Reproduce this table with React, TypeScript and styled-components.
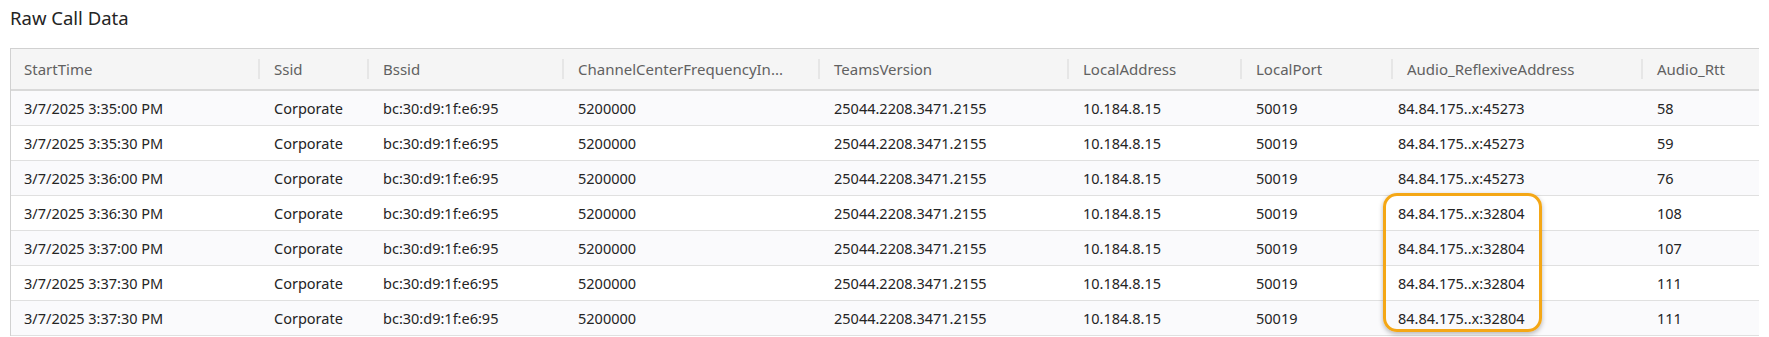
import React from 'react';
import styled, { createGlobalStyle } from 'styled-components';

const GlobalStyle = createGlobalStyle`
  html, body {
    margin: 0;
    padding: 0;
    background: #ffffff;
  }
  body {
    font-family: 'Noto Sans', 'Open Sans', sans-serif;
    color: #242424;
  }
`;

// pad = left padding of body cells in that column
const columns = [
  { key: 'startTime', title: 'StartTime', width: 247, pad: 13 },
  { key: 'ssid', title: 'Ssid', width: 109, pad: 16 },
  { key: 'bssid', title: 'Bssid', width: 195, pad: 16 },
  { key: 'freq', title: 'ChannelCenterFrequencyIn...', width: 256, pad: 16 },
  { key: 'teams', title: 'TeamsVersion', width: 249, pad: 16 },
  { key: 'localAddress', title: 'LocalAddress', width: 173, pad: 16 },
  { key: 'localPort', title: 'LocalPort', width: 151, pad: 16 },
  { key: 'reflexive', title: 'Audio_ReflexiveAddress', width: 250, pad: 7 },
  { key: 'rtt', title: 'Audio_Rtt', width: 200, pad: 16 },
];

const rows = [
  ['3/7/2025 3:35:00 PM', '45273', '58'],
  ['3/7/2025 3:35:30 PM', '45273', '59'],
  ['3/7/2025 3:36:00 PM', '45273', '76'],
  ['3/7/2025 3:36:30 PM', '32804', '108'],
  ['3/7/2025 3:37:00 PM', '32804', '107'],
  ['3/7/2025 3:37:30 PM', '32804', '111'],
  ['3/7/2025 3:37:30 PM', '32804', '111'],
].map(([time, port, rtt]) => [
  time,
  'Corporate',
  'bc:30:d9:1f:e6:95',
  '5200000',
  '25044.2208.3471.2155',
  '10.184.8.15',
  '50019',
  `84.84.175..x:${port}`,
  rtt,
]);

const gridTemplate = columns.map((c) => `${c.width}px`).join(' ');

const Page = styled.div`
  padding: 6px 0 0 10px;
  overflow: hidden;
  width: 1759px;
  height: 337px;
  box-sizing: border-box;
`;

const Title = styled.h2`
  margin: 0 0 18px;
  font-size: 18.5px;
  line-height: 24px;
  font-weight: 400;
  color: #242424;
`;

const TableWrap = styled.div`
  position: relative;
  width: 1900px;
  border-top: 1px solid #d1d1d1;
  border-left: 1px solid #d1d1d1;
`;

const HeaderRow = styled.div`
  display: grid;
  grid-template-columns: ${gridTemplate};
  height: 40px;
  background: #f5f5f5;
  border-bottom: 2px solid #d9d9d9;
`;

const HeaderCell = styled.div<{ $first?: boolean }>`
  position: relative;
  display: flex;
  align-items: center;
  padding-left: ${({ $first }) => ($first ? 13 : 16)}px;
  font-size: 15px;
  color: #616161;
  white-space: nowrap;
  overflow: hidden;

  &::before {
    content: '';
    display: ${({ $first }) => ($first ? 'none' : 'block')};
    position: absolute;
    left: 0;
    top: 10px;
    bottom: 10px;
    width: 2px;
    background: #e6e6e6;
  }
`;

const Row = styled.div<{ $tinted: boolean }>`
  display: grid;
  grid-template-columns: ${gridTemplate};
  height: 34px;
  border-bottom: 1px solid #e0e0e0;
  background: ${({ $tinted }) => ($tinted ? '#fafafc' : '#ffffff')};
`;

const Cell = styled.div<{ $pad: number }>`
  display: flex;
  align-items: center;
  padding-left: ${({ $pad }) => $pad}px;
  font-size: 14.5px;
  color: #242424;
  white-space: nowrap;
  overflow: hidden;
`;

const Highlight = styled.div`
  position: absolute;
  left: 1372px;
  top: 144px;
  width: 159px;
  height: 139px;
  box-sizing: border-box;
  border: 3px solid #f4a716;
  border-radius: 14px;
  box-shadow: 0 2px 5px rgba(0, 0, 0, 0.28);
  pointer-events: none;
`;

const App = () => (
  <>
    <GlobalStyle />
    <Page>
      <Title>Raw Call Data</Title>
      <TableWrap>
        <HeaderRow>
          {columns.map((c, i) => (
            <HeaderCell key={c.key} $first={i === 0}>
              {c.title}
            </HeaderCell>
          ))}
        </HeaderRow>
        {rows.map((r, ri) => (
          <Row key={ri} $tinted={ri % 2 === 0}>
            {r.map((v, ci) => (
              <Cell key={ci} $pad={columns[ci].pad}>
                {v}
              </Cell>
            ))}
          </Row>
        ))}
        <Highlight />
      </TableWrap>
    </Page>
  </>
);

export default App;
